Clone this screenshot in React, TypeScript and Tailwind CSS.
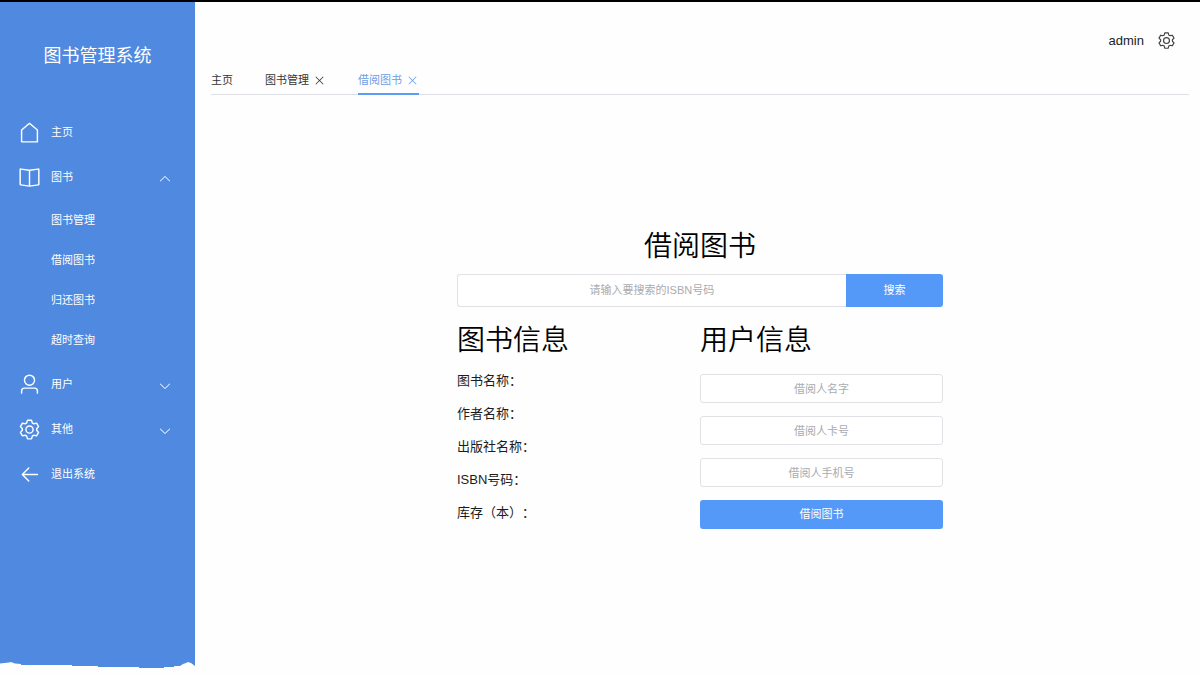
import { useState } from "react";

const ICONS = {
  house: [
    "M192 413.952V896h640V413.952L512 147.328zM139.52 374.4l352-293.312a32 32 0 0 1 40.96 0l352 293.312A32 32 0 0 1 896 398.976V928a32 32 0 0 1-32 32H160a32 32 0 0 1-32-32V398.976a32 32 0 0 1 11.52-24.576",
  ],
  reading: [
    "m512 863.36 384-54.848v-638.72L525.568 222.72a96 96 0 0 1-27.136 0L128 169.792v638.72zM137.024 106.432l370.432 52.928a32 32 0 0 0 9.088 0l370.432-52.928A64 64 0 0 1 960 169.792v638.72a64 64 0 0 1-54.976 63.36l-388.48 55.488a32 32 0 0 1-9.088 0l-388.48-55.488A64 64 0 0 1 64 808.512v-638.72a64 64 0 0 1 73.024-63.36",
    "M480 192h64v704h-64z",
  ],
  user: [
    "M512 512a192 192 0 1 0 0-384 192 192 0 0 0 0 384m0 64a256 256 0 1 1 0-512 256 256 0 0 1 0 512m320 320v-96a96 96 0 0 0-96-96H288a96 96 0 0 0-96 96v96a32 32 0 1 1-64 0v-96a160 160 0 0 1 160-160h448a160 160 0 0 1 160 160v96a32 32 0 1 1-64 0",
  ],
  setting: [
    "M600.704 64a32 32 0 0 1 30.464 22.208l35.2 109.376c14.784 7.232 28.928 15.36 42.432 24.512l112.384-24.192a32 32 0 0 1 34.432 15.36L944.32 364.8a32 32 0 0 1-4.032 37.504l-77.12 85.12a357.12 357.12 0 0 1 0 49.024l77.12 85.248a32 32 0 0 1 4.032 37.504l-88.704 153.6a32 32 0 0 1-34.432 15.296L708.8 803.904c-13.44 9.088-27.648 17.28-42.368 24.512l-35.264 109.376A32 32 0 0 1 600.704 960H423.296a32 32 0 0 1-30.464-22.208L357.696 828.48a351.616 351.616 0 0 1-42.56-24.64l-112.32 24.256a32 32 0 0 1-34.432-15.36L79.68 659.2a32 32 0 0 1 4.032-37.504l77.12-85.248a357.12 357.12 0 0 1 0-48.896l-77.12-85.248A32 32 0 0 1 79.68 364.8l88.704-153.6a32 32 0 0 1 34.432-15.296l112.32 24.256c13.568-9.152 27.776-17.408 42.56-24.64l35.2-109.312A32 32 0 0 1 423.232 64H600.64zm-23.424 64H446.72l-36.352 113.088-24.512 11.968a294.113 294.113 0 0 0-34.816 20.096l-22.656 15.36-116.224-25.088-65.28 113.152 79.68 88.192-1.92 27.136a293.12 293.12 0 0 0 0 40.192l1.92 27.136-79.808 88.192 65.344 113.152 116.224-25.024 22.656 15.296a294.113 294.113 0 0 0 34.816 20.096l24.512 11.968L446.72 896h130.688l36.48-113.152 24.448-11.904a288.282 288.282 0 0 0 34.752-20.096l22.592-15.296 116.288 25.024 65.28-113.152-79.744-88.192 1.92-27.136a293.12 293.12 0 0 0 0-40.256l-1.92-27.136 79.808-88.128-65.344-113.152-116.288 24.96-22.592-15.232a287.616 287.616 0 0 0-34.752-20.096l-24.448-11.904L577.344 128zM512 320a192 192 0 1 1 0 384 192 192 0 0 1 0-384m0 64a128 128 0 1 0 0 256 128 128 0 0 0 0-256",
  ],
  back: [
    "M224 480h640a32 32 0 1 1 0 64H224a32 32 0 0 1 0-64",
    "m237.248 512 265.408 265.344a32 32 0 0 1-45.312 45.312l-288-288a32 32 0 0 1 0-45.312l288-288a32 32 0 1 1 45.312 45.312z",
  ],
  arrowDown: [
    "M831.872 340.864 512 652.672 192.128 340.864a30.592 30.592 0 0 0-42.752 0 29.12 29.12 0 0 0 0 41.6L489.664 714.24a32 32 0 0 0 44.672 0l340.288-331.712a29.12 29.12 0 0 0 0-41.728 30.592 30.592 0 0 0-42.752 0z",
  ],
  close: [
    "M764.288 214.592 512 466.88 259.712 214.592a31.936 31.936 0 0 0-45.12 45.12L466.752 512 214.528 764.224a31.936 31.936 0 1 0 45.12 45.184L512 557.184l252.288 252.288a31.936 31.936 0 0 0 45.12-45.12L557.12 512.064l252.288-252.352a31.936 31.936 0 1 0-45.12-45.184z",
  ],
};

type IconName = keyof typeof ICONS;

function Icon({ name, className }: { name: IconName; className: string }) {
  return (
    <svg viewBox="0 0 1024 1024" fill="currentColor" aria-hidden="true" className={className}>
      {ICONS[name].map((d) => (
        <path key={d} d={d} />
      ))}
    </svg>
  );
}

type MenuEntry = { icon: IconName; label: string; children?: string[] };

const MENU: MenuEntry[] = [
  { icon: "house", label: "主页" },
  { icon: "reading", label: "图书", children: ["图书管理", "借阅图书", "归还图书", "超时查询"] },
  { icon: "user", label: "用户", children: [] },
  { icon: "setting", label: "其他", children: [] },
  { icon: "back", label: "退出系统" },
];

const ROW = "flex h-[45px] w-full items-center gap-[10px] pr-[23px] pl-[18px] text-left";

function Sidebar() {
  const [open, setOpen] = useState("图书");
  return (
    <aside className="flex w-[195px] shrink-0 flex-col bg-[#4f89e0] text-[11px] text-white">
      <div className="flex h-[108px] items-center justify-center text-lg">图书管理系统</div>
      <nav className="grow">
        <ul>
          {MENU.map(({ icon, label, children }) => (
            <li key={label}>
              {children ? (
                <button
                  type="button"
                  aria-expanded={open === label}
                  onClick={() => setOpen(open === label ? "" : label)}
                  className={ROW}
                >
                  <Icon name={icon} className="size-[23px]" />
                  <span className="grow">{label}</span>
                  <Icon
                    name="arrowDown"
                    className={open === label ? "mt-[2px] size-[14px] rotate-180" : "mt-[2px] size-[14px]"}
                  />
                </button>
              ) : (
                <a href="#" className={ROW}>
                  <Icon name={icon} className="size-[23px]" />
                  <span>{label}</span>
                </a>
              )}
              {children && children.length > 0 && open === label && (
                <ul className="pb-[2px]">
                  {children.map((child) => (
                    <li key={child}>
                      <a href="#" className="flex h-10 items-center pl-[51px]">
                        {child}
                      </a>
                    </li>
                  ))}
                </ul>
              )}
            </li>
          ))}
        </ul>
      </nav>
      <svg viewBox="0 0 195 14" preserveAspectRatio="none" aria-hidden="true" className="h-[14px] w-full">
        <path
          fill="#fefefe"
          d="M0 3.5 9 2.5 11 2 15 3.5 21 4 21 5 72 5 72 6 98 6 98 7 139 7 139 8 164 8 164 7 174 7 174 6 180 6 183 4 186 3 188 2 191 3 195 6V14H0Z"
        />
      </svg>
    </aside>
  );
}

const TABS = [
  { label: "主页", closable: false, active: false },
  { label: "图书管理", closable: true, active: false },
  { label: "借阅图书", closable: true, active: true },
];

function Tabs() {
  return (
    <nav className="flex gap-8 border-b border-[#dfe0e6] text-[11px]">
      {TABS.map(({ label, closable, active }) => (
        <div
          key={label}
          className={
            active
              ? "-mb-px flex h-[31px] items-center gap-1 border-b-2 border-[#5b9cf5] pt-[3px] text-[#6c9fe6]"
              : "-mb-px flex h-[31px] items-center gap-1 border-b-2 border-transparent pt-[3px] text-[#333333]"
          }
        >
          <a href="#">{label}</a>
          {closable && (
            <button type="button" aria-label={`关闭${label}`}>
              <Icon name="close" className="block size-[13px]" />
            </button>
          )}
        </div>
      ))}
    </nav>
  );
}

const BOOK_FIELDS = ["图书名称：", "作者名称：", "出版社名称：", "ISBN号码：", "库存（本）："];
const USER_FIELDS = ["借阅人名字", "借阅人卡号", "借阅人手机号"];

const INPUT =
  "min-w-0 border border-[#e2e1e6] bg-white px-3 text-center text-[11px] text-[#606266] outline-none placeholder:text-[#a9abb0]";

function BorrowForm() {
  return (
    <main className="mx-auto w-full max-w-[486px] pt-[132px] text-black">
      <h1 className="text-center text-[28px] leading-10 font-[350]">借阅图书</h1>
      <form className="mt-[7px] flex h-[33px]" onSubmit={(e) => e.preventDefault()}>
        <input aria-label="请输入要搜索的ISBN号码" placeholder="请输入要搜索的ISBN号码" className={`${INPUT} grow rounded-l-[3px] border-r-0`} />
        <button type="submit" className="w-1/5 rounded-r-[3px] bg-[#5499f8] text-[11px] text-white">
          搜索
        </button>
      </form>
      <div className="grid grid-cols-2 pt-[11px]">
        <section>
          <h2 className="text-[28px] leading-[46px] font-[350]">图书信息</h2>
          <ul className="text-[13px] leading-[33px] text-[#1c1c1c] [text-spacing-trim:space-all]">
            {BOOK_FIELDS.map((field) => (
              <li key={field}>{field}</li>
            ))}
          </ul>
        </section>
        <section>
          <h2 className="text-[28px] leading-[46px] font-[350]">用户信息</h2>
          <form className="flex flex-col gap-[13px] pt-[10px]" onSubmit={(e) => e.preventDefault()}>
            {USER_FIELDS.map((field) => (
              <input key={field} aria-label={field} placeholder={field} className={`${INPUT} h-[29px] rounded-[3px]`} />
            ))}
            <button type="submit" className="h-[29px] rounded-[3px] bg-[#5499f8] text-[11px] text-white">
              借阅图书
            </button>
          </form>
        </section>
      </div>
    </main>
  );
}

export default function App() {
  return (
    <div className="flex min-h-screen border-t-2 border-black bg-[#fefefe] font-['Liberation_Sans','Noto_Sans_CJK_SC',sans-serif]">
      <Sidebar />
      <div className="min-w-0 grow pr-[11px] pl-4">
        <header className="flex h-[62px] items-center justify-end gap-[13px] pt-[15px] pr-[13px] text-[13px] text-[#222222]">
          <span>admin</span>
          <button type="button" aria-label="设置">
            <Icon name="setting" className="block size-[19px] text-[#444444]" />
          </button>
        </header>
        <Tabs />
        <BorrowForm />
      </div>
    </div>
  );
}
